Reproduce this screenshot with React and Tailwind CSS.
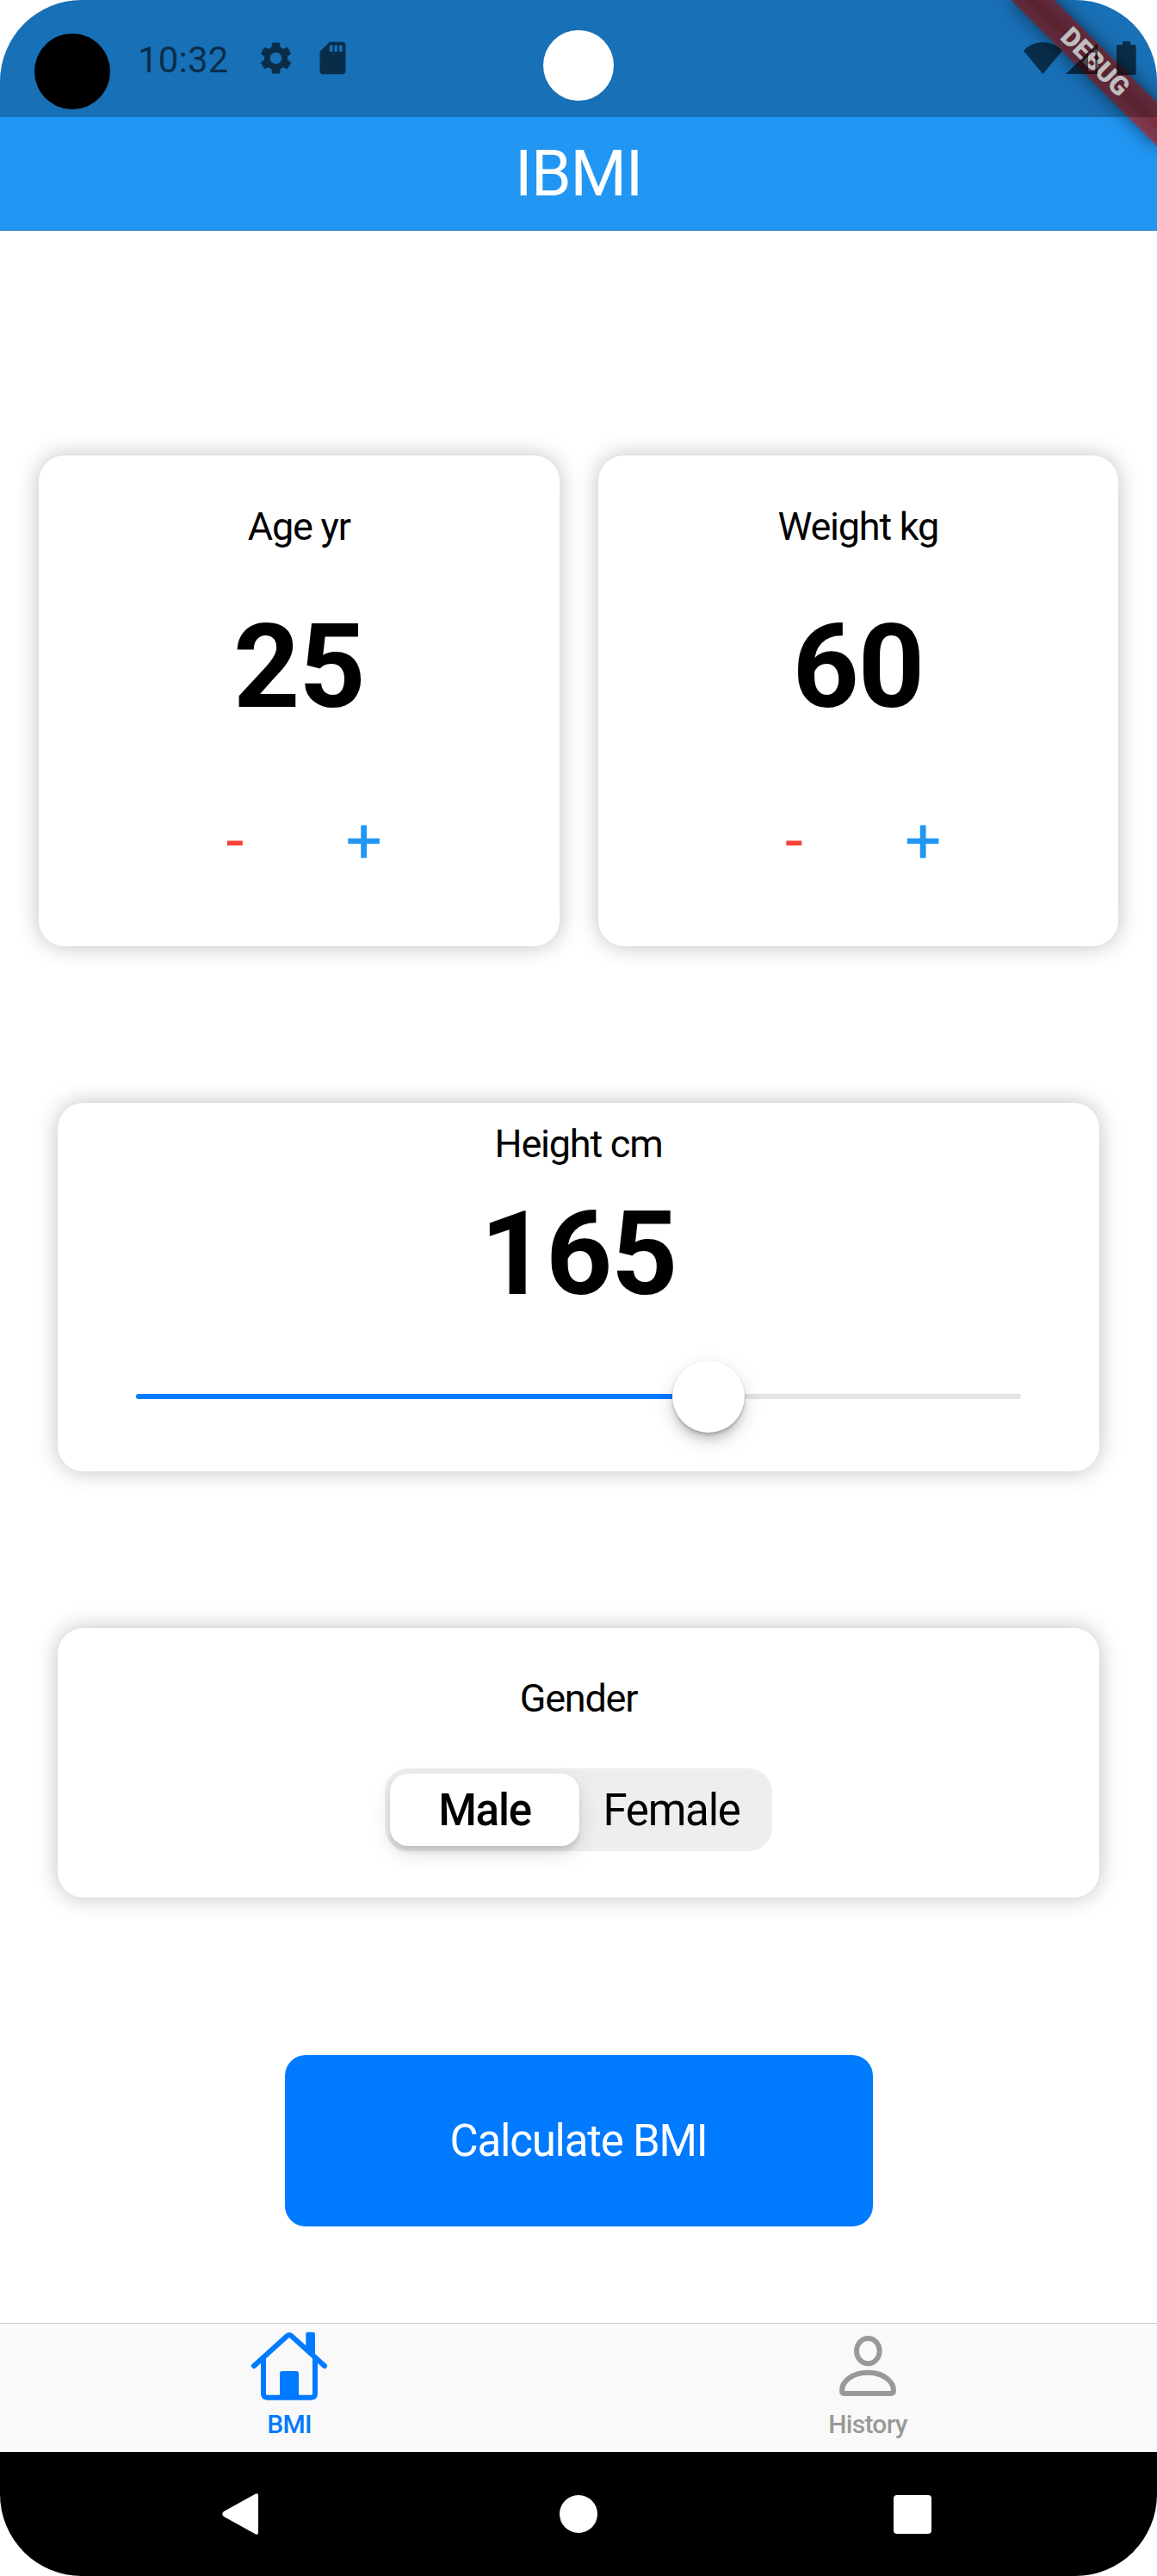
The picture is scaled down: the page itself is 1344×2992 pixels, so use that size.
import React from "react";
import { MdSettings, MdSdCard } from "react-icons/md";

const CARD = "rounded-[30px] bg-white shadow-[0_0_26px_rgba(0,0,0,0.25)]";

function StatusBar() {
  return (
    <div className="relative z-10 flex h-[136px] items-start bg-black/25 text-black/60">
      <div className="ml-10 mt-[39px] size-[88px] shrink-0 rounded-full bg-black" />
      <span className="ml-[32px] mt-[49px] w-[107px] text-[42px] leading-none tracking-[0.2px]">10:32</span>
      <MdSettings className="ml-[31px] mt-[45px] size-[45px]" />
      <MdSdCard className="ml-[21px] mt-[45px] size-[45px]" />
      <div className="absolute left-[631px] top-[35px] size-[82px] rounded-full bg-white" />
      <svg className="ml-auto mr-[24px] mt-12 h-10 w-[131px]" viewBox="135 144 393 120" fill="currentColor">
        <path d="M202 258 L135 177 Q162 147 202 147 Q243 147 270 177 Z" />
        <path fillRule="evenodd" d="M282 258 L393 150 V258 Z M360 183 V248 H385 V183 Z" />
        <path d="M480 144 H507 V156 H522 Q527 156 527 162 V255 Q527 261 521 261 H465 Q459 261 459 255 V162 Q459 156 464 156 H480 Z" />
      </svg>
    </div>
  );
}

function DebugBanner() {
  return (
    <div className="absolute left-[1224px] top-[84px] flex h-9 w-[240px] origin-[120px_-84px] rotate-45 items-center justify-center bg-linear-to-b from-[#803d56] via-[#792e3f] to-[#803d56] text-[30.6px] font-black leading-none tracking-normal text-white shadow-[0_0_21px_rgba(0,0,0,0.5)]">
      DEBUG
    </div>
  );
}

function Counter({ label, value }) {
  return (
    <div className={`${CARD} flex h-[570px] flex-1 flex-col items-center`}>
      <div className="mt-[60px] text-[45px] leading-none">{label}</div>
      <div className="mt-[74px] text-[135px] font-bold leading-none">{value}</div>
      <div className="mt-[96px] flex text-center text-[75px] leading-none">
        <button className="w-[150px] text-[#f44336]">-</button>
        <button className="w-[150px] text-[#2196f3]">+</button>
      </div>
    </div>
  );
}

function Tab({ label, color, children }) {
  return (
    <div className={`flex flex-1 flex-col items-center pt-[9px] ${color}`}>
      {children}
      <span className="mt-[13px] text-[30px] font-medium leading-none tracking-[-0.72px]">{label}</span>
    </div>
  );
}

export default function App() {
  return (
    <div className="relative flex h-[2992px] w-[1344px] flex-col overflow-hidden rounded-[95px] bg-white font-['Roboto',sans-serif] tracking-[-1.23px] text-black">
      <header className="relative h-[268px] shrink-0 overflow-hidden border-b border-[#1b7ac4] bg-[#2196f3]">
        <DebugBanner />
        <StatusBar />
        <h1 className="mt-[28px] text-center text-[75px] leading-none text-white">IBMI</h1>
      </header>

      <main className="flex flex-1 flex-col items-center pt-[261.4px]">
        <div className="flex w-full gap-[45px] px-[45px]">
          <Counter label="Age yr" value="25" />
          <Counter label="Weight kg" value="60" />
        </div>

        <section className={`${CARD} mt-[182px] flex h-[427.4px] w-[1209.6px] flex-col items-center`}>
          <div className="mt-[25px] text-[45px] leading-none">Height cm</div>
          <div className="mt-[38.3px] text-[135px] font-bold leading-none">165</div>
          <div className="mt-[55px] flex h-[84px] w-[1028px] items-center">
            <div className="h-[6px] w-[623px] rounded-l-[3px] bg-[#007aff]" />
            <div className="relative z-10 size-[84px] shrink-0 rounded-full bg-white shadow-[0_9px_24px_rgba(0,0,0,0.15),0_3px_3px_rgba(0,0,0,0.16),0_9px_9px_rgba(0,0,0,0.1),0_0_0_1px_rgba(0,0,0,0.04)]" />
            <div className="h-[6px] flex-1 rounded-r-[3px] bg-[#e4e4e6]" />
          </div>
        </section>

        <section className={`${CARD} mt-[182.2px] flex h-[312.7px] w-[1209.6px] flex-col items-center`}>
          <div className="mt-[59px] text-[45px] leading-none">Gender</div>
          <div className="mt-[59px] flex h-24 w-[450px] items-center rounded-[27px] bg-[#eeeeee] px-[6px] text-[51px] leading-none">
            <div className="flex h-[84px] w-[220px] items-center justify-center rounded-[21px] bg-white pt-px font-medium shadow-[0_9px_24px_rgba(0,0,0,0.12),0_9px_3px_rgba(0,0,0,0.04),0_3px_6px_rgba(0,0,0,0.08)]">Male</div>
            <div className="flex h-[84px] flex-1 items-center justify-center pr-1 pt-px">Female</div>
          </div>
        </section>

        <button className="mt-[183px] h-[199.5px] w-[683px] rounded-[24px] bg-[#007aff] pt-px text-[51px] leading-none text-white">
          Calculate BMI
        </button>
      </main>

      <nav className="flex h-[150px] shrink-0 border-t border-[#c8c8c8] bg-[#f9f9f9]">
        <Tab label="BMI" color="text-[#007aff]">
          <svg className="h-20 w-[90px]" viewBox="123 84 270 240" fill="none" stroke="currentColor" strokeWidth="18" strokeLinecap="round" strokeLinejoin="round">
            <path d="M135 204 L251 99 Q258 93 265 99 L381 204" />
            <path d="M168 178 V301 Q168 314 181 314 H335 Q348 314 348 301 V178" />
            <path d="M322 86 H342 Q348 86 348 92 V172 L316 143 V92 Q316 86 322 86 Z" fill="currentColor" stroke="none" />
            <path d="M225 314 V230 Q225 222 233 222 H283 Q291 222 291 230 V314 Z" fill="currentColor" stroke="none" />
          </svg>
        </Tab>
        <Tab label="History" color="text-[#999999]">
          <svg className="h-20 w-[90px]" viewBox="129 84 270 240" fill="none" stroke="currentColor" strokeWidth="18" strokeLinejoin="round">
            <ellipse cx="265" cy="152" rx="40" ry="44" />
            <path d="M174 290 C174 258 210 227 264 227 C318 227 354 258 354 290 Q354 300 342 300 H186 Q174 300 174 290 Z" />
          </svg>
        </Tab>
      </nav>

      <div className="h-36 shrink-0 bg-black">
        <div className="flex h-full items-center justify-between pl-[258px] pr-[262px]">
          <svg className="h-12 w-[42px]" viewBox="0 0 42 48" fill="white">
            <path d="M39 .6 Q42 -.8 42 2.5 V45.500 Q42 48.800 39 47.400 L2 27 Q-1.500 24 2 21 Z" />
          </svg>
          <div className="ml-[5px] size-[44px] rounded-full bg-white" />
          <div className="h-[45px] w-[44px] rounded-[4px] bg-white" />
        </div>
      </div>
    </div>
  );
}
